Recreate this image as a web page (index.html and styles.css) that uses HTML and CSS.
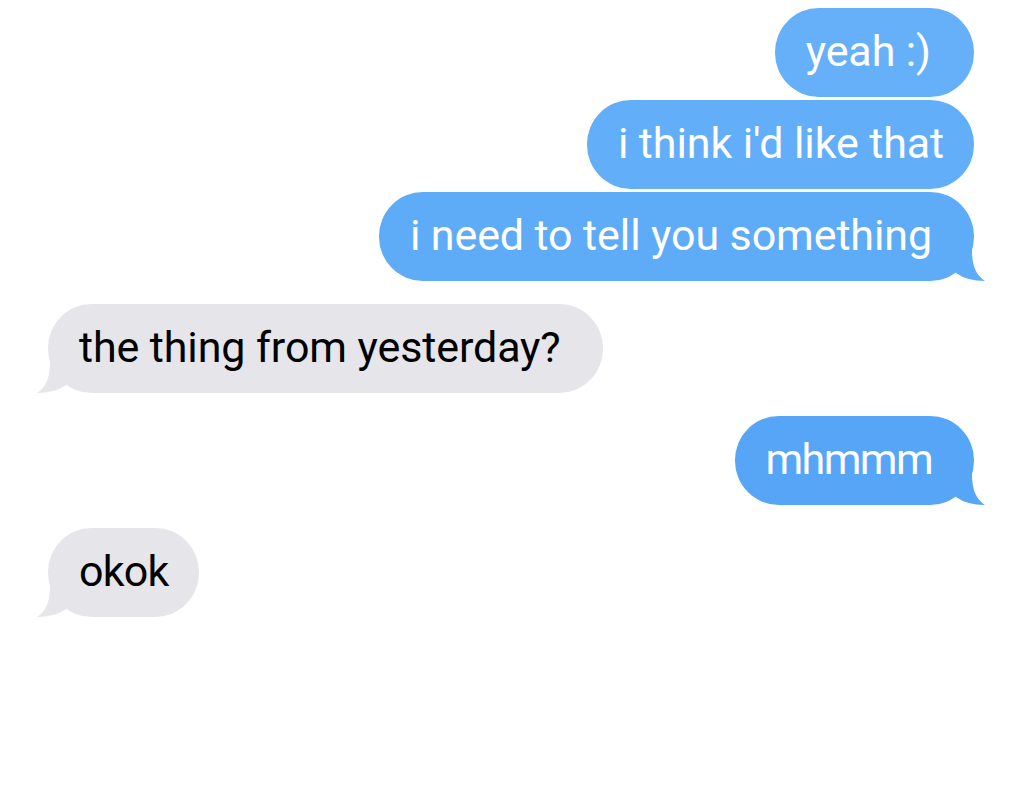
FILE: index.html
```html
<!DOCTYPE html>
<html>
<head>
<meta charset="utf-8">
<link rel="stylesheet" href="styles.css">
</head>
<body>
<div class="chat">
  <div class="group sent">
    <div class="bubble sent c1">yeah :)</div>
    <div class="bubble sent c2">i think i'd like that</div>
    <div class="bubble sent c3">i need to tell you something<svg class="tail" viewBox="0 0 44 44" width="44" height="44"><path d="M0 0H29V14Q29 36 42 44Q24 44 13 36L0 20Z"/></svg></div>
  </div>
  <div class="group recv">
    <div class="bubble recv g1">the thing from yesterday?<svg class="tail" viewBox="0 0 44 44" width="44" height="44"><path d="M0 0H29V14Q29 36 42 44Q24 44 13 36L0 20Z"/></svg></div>
  </div>
  <div class="group sent">
    <div class="bubble sent c4">mhmmm<svg class="tail" viewBox="0 0 44 44" width="44" height="44"><path d="M0 0H29V14Q29 36 42 44Q24 44 13 36L0 20Z"/></svg></div>
  </div>
  <div class="group recv">
    <div class="bubble recv g2">okok<svg class="tail" viewBox="0 0 44 44" width="44" height="44"><path d="M0 0H29V14Q29 36 42 44Q24 44 13 36L0 20Z"/></svg></div>
  </div>
</div>
</body>
</html>
```
FILE: styles.css
```css
html, body {
  margin: 0;
  padding: 0;
  background: #ffffff;
}
body {
  width: 1024px;
  height: 800px;
  overflow: hidden;
  font-family: Roboto, "Liberation Sans", sans-serif;
}
.chat {
  display: flex;
  flex-direction: column;
  gap: 23px;
  padding: 8px 50px 0 48px;
}
.group {
  display: flex;
  flex-direction: column;
  gap: 3px;
}
.group.sent { align-items: flex-end; }
.group.recv { align-items: flex-start; }
.bubble {
  position: relative;
  height: 89px;
  box-sizing: border-box;
  display: flex;
  align-items: center;
  padding: 0 31px 3px;
  border-radius: 44px;
  font-size: 43px;
  letter-spacing: -0.1px;
  white-space: nowrap;
}
.bubble.sent { color: #ffffff; background: #62aef8; fill: #62aef8; }
.bubble.c1 { background: #65b0f8; padding-right: 43px; }
.bubble.c2 { background: #62aef8; padding-right: 30px; }
.bubble.c3 { background: #5eabf7; fill: #5eabf7; padding-right: 42px; }
.bubble.c4 { background: #56a5f6; fill: #56a5f6; padding: 0 42px 3px 30px; letter-spacing: -1.6px; }
.bubble.recv { color: #000000; background: #e5e5ea; fill: #e5e5ea; }
.bubble.g1 { padding-right: 42px; }
.bubble.g2 { padding-right: 31px; letter-spacing: -0.8px; }
.tail {
  position: absolute;
  bottom: 0;
  display: block;
}
.sent .tail { right: -13px; }
.recv .tail { left: -13px; transform: scaleX(-1); }
```
